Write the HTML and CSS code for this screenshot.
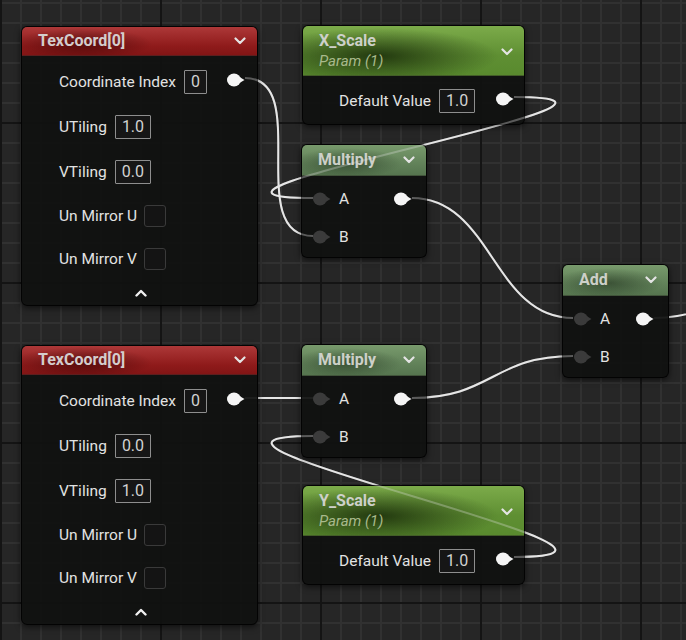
FILE: index.html
```html
<!DOCTYPE html>
<html>
<head>
  <link rel="stylesheet" href="styles.css">
</head>
<body>
  <div class="graph">
    <!-- wires under the nodes -->
    <svg class="wires" viewBox="0 0 686 640">
      <path d="M245 78 C313 78 243 236 313 236"/>
      <path d="M514 97 C714 97 113 198 313 198"/>
      <path d="M412 198 C492 198 493 318 573 318"/>
      <path d="M412 398 C492 398 493 356 573 356"/>
      <path d="M245 398 L313 398"/>
      <path d="M514 557 C714 557 113 436 313 436"/>
      <path d="M654 318 C690 318 700 306 760 300"/>
    </svg>

    <div class="node node-tex tex-top">
      <div class="head head-red">
        <span class="title">TexCoord[0]</span>
        <svg class="chev" viewBox="0 0 12 8"><polyline points="1.5,1.5 6,6 10.5,1.5"/></svg>
      </div>
      <div class="body">
        <div class="rows">
          <div class="row">
            <span class="label">Coordinate Index</span><span class="box">0</span>
            <svg class="pin pin-out" viewBox="0 0 18 14"><ellipse cx="7" cy="7" rx="7" ry="6.5"/><path d="M12.5 4 L17.5 7 L12.5 10 Z"/></svg>
          </div>
          <div class="row"><span class="label">UTiling</span><span class="box">1.0</span></div>
          <div class="row"><span class="label">VTiling</span><span class="box">0.0</span></div>
          <div class="row row-check"><span class="label">Un Mirror U</span><span class="check"></span></div>
          <div class="row row-check"><span class="label">Un Mirror V</span><span class="check"></span></div>
        </div>
        <svg class="more" viewBox="0 0 12 8"><polyline points="1.5,6.5 6,2 10.5,6.5"/></svg>
      </div>
    </div>

    <div class="node node-param xscale">
      <div class="head head-green">
        <div class="titles">
          <span class="title">X_Scale</span>
          <span class="sub">Param (1)</span>
        </div>
        <svg class="chev" viewBox="0 0 12 8"><polyline points="1.5,1.5 6,6 10.5,1.5"/></svg>
      </div>
      <div class="body body-param">
        <div class="row">
          <span class="label">Default Value</span><span class="box">1.0</span>
          <svg class="pin pin-out" viewBox="0 0 18 14"><ellipse cx="7" cy="7" rx="7" ry="6.5"/><path d="M12.5 4 L17.5 7 L12.5 10 Z"/></svg>
        </div>
      </div>
    </div>

    <div class="node node-op mul-top">
      <div class="head head-op">
        <span class="title">Multiply</span>
        <svg class="chev" viewBox="0 0 12 8"><polyline points="1.5,1.5 6,6 10.5,1.5"/></svg>
      </div>
      <div class="body body-op">
        <div class="pinrow">
          <svg class="pin pin-in" viewBox="0 0 18 14"><ellipse cx="7" cy="7" rx="7" ry="6.5"/><path d="M12.5 4 L17.5 7 L12.5 10 Z"/></svg>
          <span class="label">A</span>
          <svg class="pin pin-out" viewBox="0 0 18 14"><ellipse cx="7" cy="7" rx="7" ry="6.5"/><path d="M12.5 4 L17.5 7 L12.5 10 Z"/></svg>
        </div>
        <div class="pinrow">
          <svg class="pin pin-in" viewBox="0 0 18 14"><ellipse cx="7" cy="7" rx="7" ry="6.5"/><path d="M12.5 4 L17.5 7 L12.5 10 Z"/></svg>
          <span class="label">B</span>
        </div>
      </div>
    </div>

    <div class="node node-op add">
      <div class="head head-op">
        <span class="title">Add</span>
        <svg class="chev" viewBox="0 0 12 8"><polyline points="1.5,1.5 6,6 10.5,1.5"/></svg>
      </div>
      <div class="body body-op">
        <div class="pinrow">
          <svg class="pin pin-in" viewBox="0 0 18 14"><ellipse cx="7" cy="7" rx="7" ry="6.5"/><path d="M12.5 4 L17.5 7 L12.5 10 Z"/></svg>
          <span class="label">A</span>
          <svg class="pin pin-out" viewBox="0 0 18 14"><ellipse cx="7" cy="7" rx="7" ry="6.5"/><path d="M12.5 4 L17.5 7 L12.5 10 Z"/></svg>
        </div>
        <div class="pinrow">
          <svg class="pin pin-in" viewBox="0 0 18 14"><ellipse cx="7" cy="7" rx="7" ry="6.5"/><path d="M12.5 4 L17.5 7 L12.5 10 Z"/></svg>
          <span class="label">B</span>
        </div>
      </div>
    </div>

    <div class="node node-tex tex-bottom">
      <div class="head head-red">
        <span class="title">TexCoord[0]</span>
        <svg class="chev" viewBox="0 0 12 8"><polyline points="1.5,1.5 6,6 10.5,1.5"/></svg>
      </div>
      <div class="body">
        <div class="rows">
          <div class="row">
            <span class="label">Coordinate Index</span><span class="box">0</span>
            <svg class="pin pin-out" viewBox="0 0 18 14"><ellipse cx="7" cy="7" rx="7" ry="6.5"/><path d="M12.5 4 L17.5 7 L12.5 10 Z"/></svg>
          </div>
          <div class="row"><span class="label">UTiling</span><span class="box">0.0</span></div>
          <div class="row"><span class="label">VTiling</span><span class="box">1.0</span></div>
          <div class="row row-check"><span class="label">Un Mirror U</span><span class="check"></span></div>
          <div class="row row-check"><span class="label">Un Mirror V</span><span class="check"></span></div>
        </div>
        <svg class="more" viewBox="0 0 12 8"><polyline points="1.5,6.5 6,2 10.5,6.5"/></svg>
      </div>
    </div>

    <div class="node node-op mul-bottom">
      <div class="head head-op">
        <span class="title">Multiply</span>
        <svg class="chev" viewBox="0 0 12 8"><polyline points="1.5,1.5 6,6 10.5,1.5"/></svg>
      </div>
      <div class="body body-op">
        <div class="pinrow">
          <svg class="pin pin-in" viewBox="0 0 18 14"><ellipse cx="7" cy="7" rx="7" ry="6.5"/><path d="M12.5 4 L17.5 7 L12.5 10 Z"/></svg>
          <span class="label">A</span>
          <svg class="pin pin-out" viewBox="0 0 18 14"><ellipse cx="7" cy="7" rx="7" ry="6.5"/><path d="M12.5 4 L17.5 7 L12.5 10 Z"/></svg>
        </div>
        <div class="pinrow">
          <svg class="pin pin-in" viewBox="0 0 18 14"><ellipse cx="7" cy="7" rx="7" ry="6.5"/><path d="M12.5 4 L17.5 7 L12.5 10 Z"/></svg>
          <span class="label">B</span>
        </div>
      </div>
    </div>

    <div class="node node-param yscale">
      <div class="head head-green">
        <div class="titles">
          <span class="title">Y_Scale</span>
          <span class="sub">Param (1)</span>
        </div>
        <svg class="chev" viewBox="0 0 12 8"><polyline points="1.5,1.5 6,6 10.5,1.5"/></svg>
      </div>
      <div class="body body-param">
        <div class="row">
          <span class="label">Default Value</span><span class="box">1.0</span>
          <svg class="pin pin-out" viewBox="0 0 18 14"><ellipse cx="7" cy="7" rx="7" ry="6.5"/><path d="M12.5 4 L17.5 7 L12.5 10 Z"/></svg>
        </div>
      </div>
    </div>

    <!-- same wires again, faint, so they show through the nodes -->
    <svg class="wires wires-over" viewBox="0 0 686 640">
      <path d="M245 78 C313 78 243 236 313 236"/>
      <path d="M514 97 C714 97 113 198 313 198"/>
      <path d="M412 198 C492 198 493 318 573 318"/>
      <path d="M412 398 C492 398 493 356 573 356"/>
      <path d="M514 557 C714 557 113 436 313 436"/>
    </svg>
  </div>
</body>
</html>
```
FILE: styles.css
```css
* {
  margin: 0;
  padding: 0;
  box-sizing: border-box;
}

body {
  background: #262626;
  font-family: Roboto, "Noto Sans", sans-serif;
  color: #e2e2e2;
}

/* graph canvas with the minor and major grid */
.graph {
  position: relative;
  width: 686px;
  height: 640px;
  overflow: hidden;
  background-color: #262626;
  background-image:
    linear-gradient(90deg, #141414 2px, transparent 2px),
    linear-gradient(#141414 2px, transparent 2px),
    linear-gradient(90deg, #313131 2px, transparent 2px),
    linear-gradient(#313131 2px, transparent 2px);
  background-size: 160px 160px, 160px 160px, 20px 20px, 20px 20px;
  background-position: 0 0, 0 122px, 0 0, 0 2px;
}

.wires {
  position: absolute;
  top: 0;
  left: 0;
  width: 686px;
  height: 640px;
  fill: none;
  stroke: #e6e6e6;
  stroke-width: 2;
}

.wires-over {
  opacity: 0.3;
  pointer-events: none;
}

/* nodes */
.node {
  position: absolute;
  display: flex;
  flex-direction: column;
  border-radius: 6px;
  background: rgba(16, 17, 16, 0.94);
  border: 1px solid rgba(0, 0, 0, 0.8);
  box-shadow: 0 2px 6px rgba(0, 0, 0, 0.6);
  overflow: hidden;
}

.node-tex { width: 237px; }
.node-param { width: 223px; }
.node-op { width: 126px; }

.tex-top { left: 21px; top: 26px; }
.tex-bottom { left: 21px; top: 345px; }
.xscale { left: 302px; top: 25px; }
.yscale { left: 302px; top: 485px; }
.mul-top { left: 301px; top: 144px; }
.mul-bottom { left: 301px; top: 344px; }
.add { left: 562px; top: 264px; width: 107px; }

.head {
  display: flex;
  align-items: center;
  justify-content: space-between;
  padding: 0 11px 0 16px;
  border-bottom: 1px solid rgba(0, 0, 0, 0.45);
}

.head-red {
  height: 29px;
  background:
    radial-gradient(ellipse 70px 16px at 60px 17px, rgba(40, 0, 0, 0.55), transparent),
    linear-gradient(#ad3838, #8e1a1a 70%, #821515);
}

.head-green {
  height: 50px;
  padding-top: 1px;
  background:
    radial-gradient(ellipse 120px 28px at 75px 30px, rgba(20, 36, 6, 0.8), transparent),
    linear-gradient(#7cab4a, #5f8f33 60%, #598a2e);
}

.head-op {
  height: 31px;
  background:
    radial-gradient(ellipse 55px 15px at 45px 18px, rgba(20, 34, 18, 0.5), transparent),
    linear-gradient(#789a6c, #5f7f57 70%, #56754f);
}

.title {
  font-size: 16px;
  font-weight: bold;
  color: #d4cdcd;
  line-height: 20px;
}

.head-green .title,
.head-op .title {
  color: #cdd0c9;
}

.titles {
  display: flex;
  flex-direction: column;
}

.sub {
  font-size: 15px;
  font-style: italic;
  color: #a9ba8c;
  line-height: 21px;
}

.chev {
  width: 12px;
  height: 8px;
  fill: none;
  stroke: #e4e4e4;
  stroke-width: 2.2;
  stroke-linecap: round;
  stroke-linejoin: round;
}

.head-green .chev { margin-top: 2px; }

/* texcoord body */
.body {
  display: flex;
  flex-direction: column;
  padding: 14px 0 6px;
}

.rows {
  display: flex;
  flex-direction: column;
  gap: 21px;
}

.row {
  display: flex;
  align-items: center;
  height: 24px;
  padding: 0 12px 0 37px;
}

.row-check { height: 22px; }

.label {
  font-size: 15.5px;
  color: #e2e2e2;
  white-space: nowrap;
}

.box {
  margin-left: 8px;
  height: 24px;
  min-width: 23px;
  padding: 0 6px;
  border: 1px solid #8e8e8e;
  border-radius: 1px;
  background: #161616;
  color: #d2d2d2;
  font-size: 16px;
  line-height: 22px;
  text-align: center;
}

.check {
  margin-left: 7px;
  width: 22px;
  height: 22px;
  border: 1px solid #3a3a3a;
  border-radius: 3px;
  background: #141414;
}

.more {
  align-self: center;
  margin-top: 17px;
  margin-left: 2px;
  width: 12px;
  height: 12px;
  fill: none;
  stroke: #f0f0f0;
  stroke-width: 2.4;
  stroke-linecap: round;
  stroke-linejoin: round;
}

.pin {
  width: 18px;
  height: 14px;
  flex-shrink: 0;
}

.pin-out {
  margin-left: auto;
  fill: #f5f5f5;
}

.pin-in {
  fill: #3b3b3b;
}

.row .pin-out { margin-bottom: 5px; }

/* parameter body */
.body-param {
  padding: 13px 0 11px;
}

.body-param .row {
  padding: 0 10px 0 36px;
}

/* operator body */
.body-op {
  gap: 18px;
  padding: 13px 0 10px;
}

.pinrow {
  display: flex;
  align-items: center;
  height: 20px;
  padding: 0 14px 0 11px;
}

.pinrow .label {
  margin-left: 8px;
  font-size: 15.5px;
}
```
